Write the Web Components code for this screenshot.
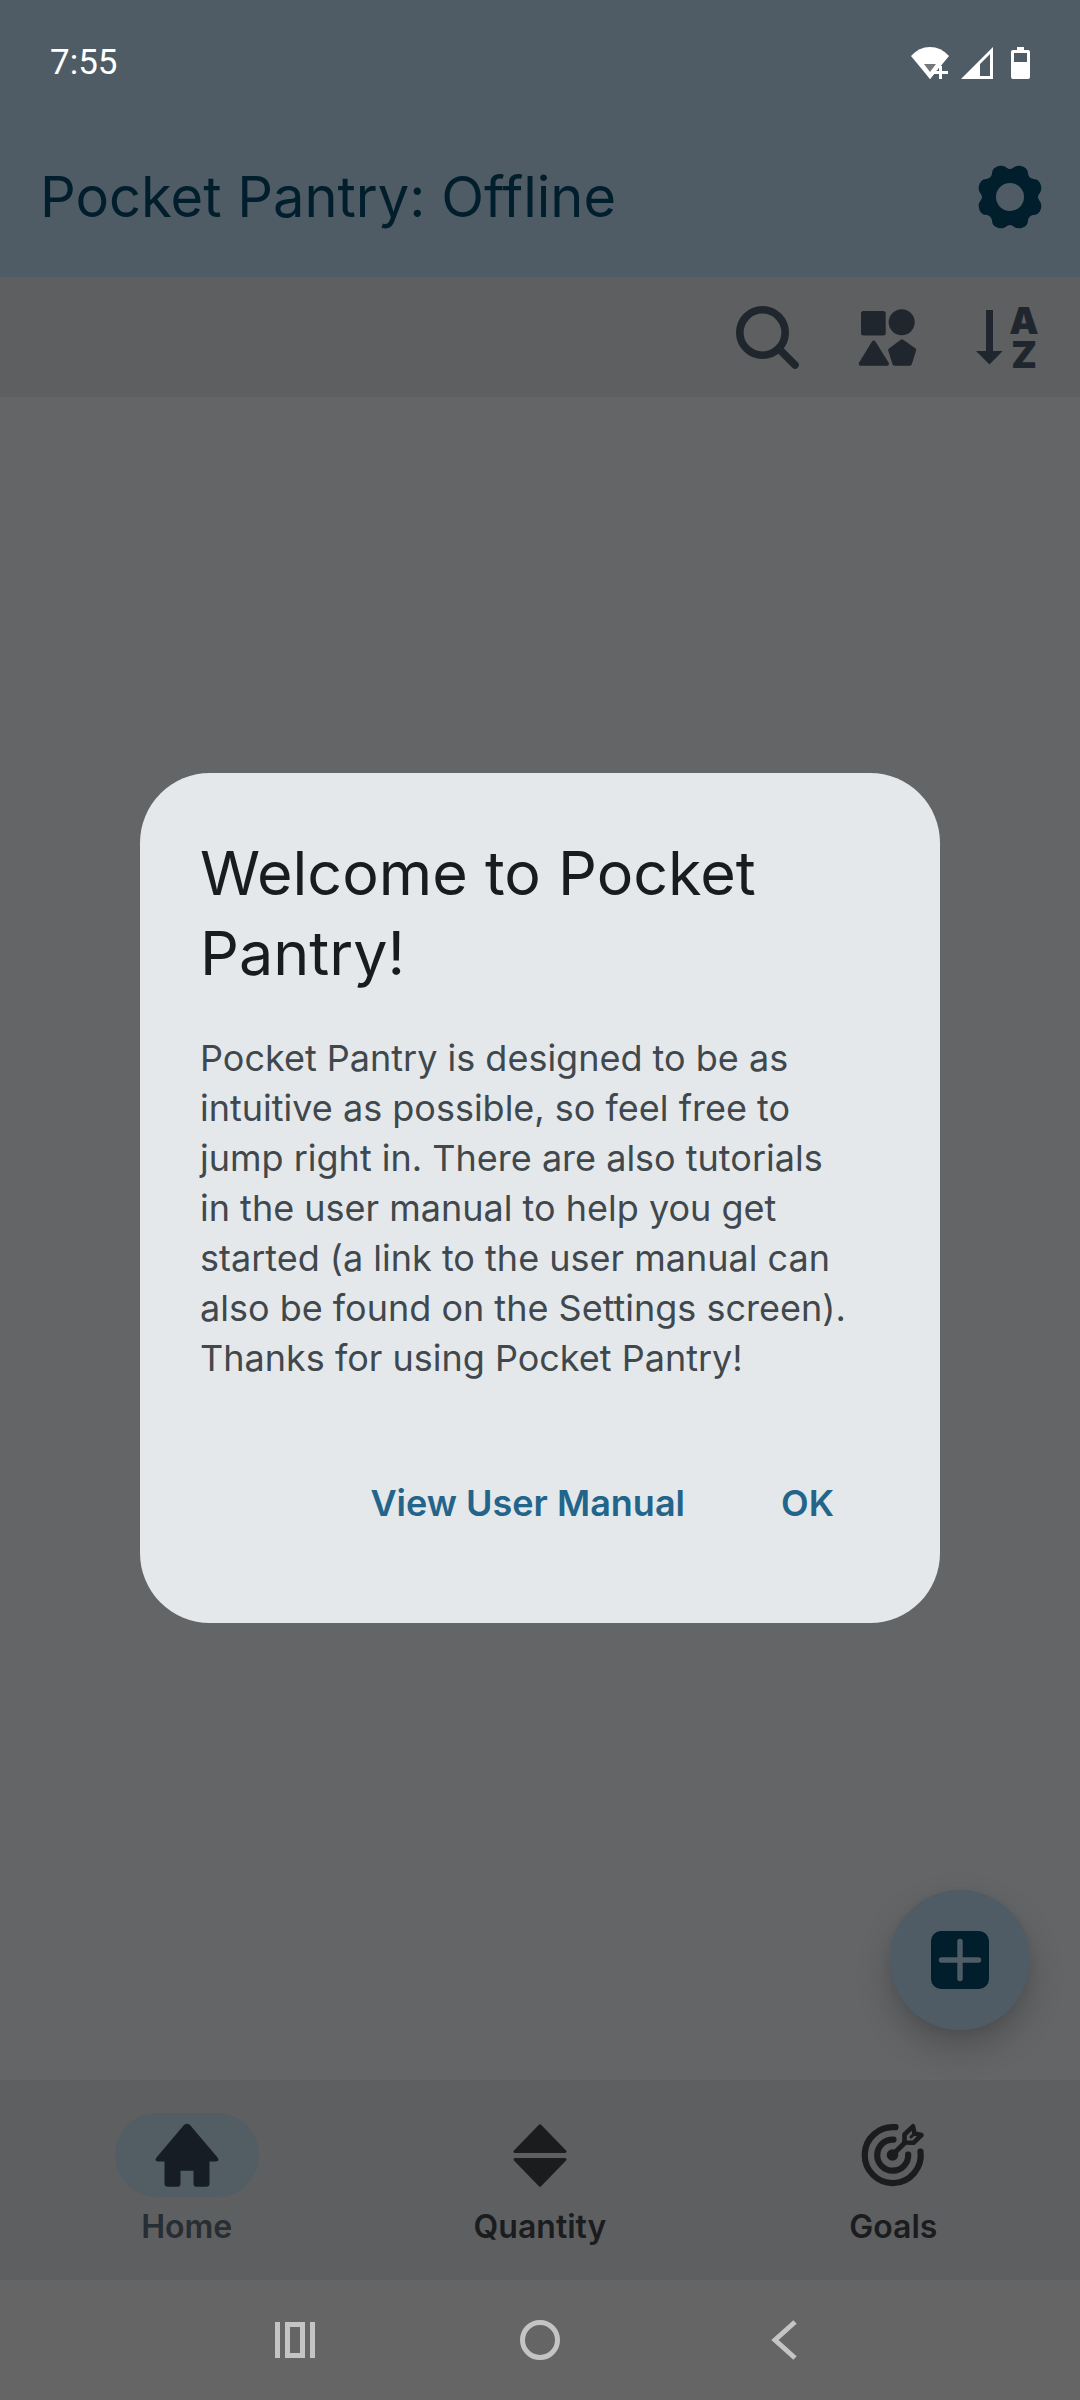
<!DOCTYPE html>
<html lang="en">
<head>
<meta charset="utf-8">
<meta name="viewport" content="width=device-width, initial-scale=1">
<title>Pocket Pantry</title>
<style>
  html, body {
    margin: 0;
    height: 100%;
  }

  body {
    --bar: #505c65;
    --on-bar: #001e2c;
    --surface: #646567;
    --container: #5e5f61;
    font-family: Inter, "Open Sans", sans-serif;
    background: #646567;
  }
</style>
</head>
<body>
<pantry-app></pantry-app>

<script>
/**
 * Attaches an open shadow root and fills it with markup.
 *
 * @param {HTMLElement} host - The element that gets the shadow root.
 * @param {string} html - Styles and markup.
 */
function render (host, html) {
  host.attachShadow({ mode: 'open' })
  host.shadowRoot.innerHTML = html
}

const icons = {
  gear: '<path fill-rule="evenodd" d="M32 4C35 4 36.500 .7 40.500 .7C45 .7 49.300 3 49.800 7C50 11.500 52.500 14 57 14.200C61 14.700 63.300 19 63.300 23.500C63.300 27.500 60 29 60 32C60 35 63.300 36.500 63.300 40.500C63.300 45 61 49.300 57 49.800C52.500 50 50 52.500 49.800 57C49.300 61 45 63.300 40.500 63.300C36.500 63.300 35 60 32 60C29 60 27.500 63.300 23.500 63.300C19 63.300 14.700 61 14.200 57C14 52.500 11.500 50 7 49.800C3 49.300 .7 45 .7 40.500C.7 36.500 4 35 4 32C4 29 .7 27.500 .7 23.500C.7 19 3 14.700 7 14.200C11.500 14 14 11.500 14.200 7C14.700 3 19 .7 23.500 .7C27.500 .7 29 4 32 4ZM32 18A14 14 0 1 0 32 46A14 14 0 1 0 32 18Z"/>',
  search: '<g fill="none" stroke="currentColor" stroke-width="7.600" stroke-linecap="round"><circle cx="26.500" cy="27.500" r="22.700"/><path d="M43 44L59 60"/></g>',
  category: '<rect x="5" y="6" width="24.700" height="24.600" rx="2.500"/><circle cx="45.700" cy="17.300" r="13"/><g stroke="currentColor" stroke-width="4" stroke-linejoin="round"><path d="M17.700 37.500L31 58.700H4.700Z"/><path d="M46 36.300L58.200 45L53.900 58.700H38.400L34.100 45Z"/></g>',
  sort: '<path d="M10 5H17V46H26.700L13.500 59.500L0 46H10Z"/><g font-family="Inter, sans-serif" font-weight="900" font-size="37" text-anchor="middle"><text x="48" y="29">A</text><text x="48" y="63">Z</text></g>',
  home: '<path d="M29 2Q32 -.5 35 2L62.500 34.500Q65 38 61 38.500H54.500V60.500Q54.500 63.800 51 63.800H41Q38.500 63.500 38.500 60.500V47.700H25.500V60.500Q25.500 63.500 23 63.800H13Q9.500 63.800 9.500 60.500V38.500H3Q-1 38 1.500 34.500Z"/>',
  quantity: '<g stroke="currentColor" stroke-width="3" stroke-linejoin="round"><path d="M32 2.800L57 28.500H7Z"/><path d="M32 62.200L57 36.500H7Z"/></g>',
  goals: '<g fill="none" stroke="currentColor" stroke-width="6.200" stroke-linecap="round"><path d="M34.500 4.200A28 28 0 1 0 59.500 28.500"/><path d="M32.500 16.700A15.500 15.500 0 1 0 47.200 31.500"/><path d="M31.500 32L43 20.500" stroke-width="5"/><path d="M43.500 19.500V11.500L52 3.300L53.500 10.500L60.500 12L52.500 19.800Z" stroke-width="4.600" stroke-linejoin="round"/><path d="M50 14L53 11" stroke-width="3"/></g><circle cx="31.500" cy="32" r="5.800"/>',
  add: '<path fill-rule="evenodd" d="M13 3H51A10 10 0 0 1 61 13V51A10 10 0 0 1 51 61H13A10 10 0 0 1 3 51V13A10 10 0 0 1 13 3ZM29.300 13.500V29.300H13.500A2.700 2.700 0 0 0 13.500 34.700H29.300V50.500A2.700 2.700 0 0 0 34.700 50.500V34.700H50.500A2.700 2.700 0 0 0 50.500 29.300H34.700V13.500A2.700 2.700 0 0 0 29.300 13.500Z"/>',
  recents: '<path fill-rule="evenodd" d="M12 14H17V50H12ZM47 14H52V50H47ZM22 14H42V50H22ZM27 19V45H37V19Z"/>',
  circle: '<circle cx="32" cy="32" r="17.500" fill="none" stroke="currentColor" stroke-width="5"/>',
  back: '<path d="M42 14L22 32L42 50" fill="none" stroke="currentColor" stroke-width="5"/>'
}

/**
 * Draws one of the icons on a 64px grid.
 */
class PantryIcon extends HTMLElement {
  connectedCallback () {
    render(this, `
      <style>
        :host { display: block; width: 64px; height: 64px; }
        svg { display: block; overflow: visible; }
      </style>
      <svg viewBox="0 0 64 64" width="64" height="64" fill="currentColor" aria-hidden="true">${icons[this.getAttribute('name')]}</svg>
    `)
  }
}
customElements.define('pantry-icon', PantryIcon)

/**
 * A square button that shows a single icon.
 */
class IconButton extends HTMLElement {
  connectedCallback () {
    render(this, `
      <style>
        :host { display: block; }
        button {
          display: flex;
          justify-content: center;
          align-items: center;
          width: var(--button-width, 120px);
          height: 120px;
          padding: 0;
          border: 0;
          background: none;
          color: inherit;
        }
      </style>
      <button type="button" aria-label="${this.getAttribute('label')}">
        <pantry-icon name="${this.getAttribute('icon')}"></pantry-icon>
      </button>
    `)
  }
}
customElements.define('icon-button', IconButton)

/**
 * Clock, wifi, signal and battery.
 */
class StatusBar extends HTMLElement {
  constructor () {
    super()
    render(this, `
      <style>
        :host {
          display: flex;
          justify-content: space-between;
          align-items: center;
          box-sizing: border-box;
          height: 117px;
          padding: 8px 50px 0;
          background: var(--bar);
          color: #fff;
          font: 35px/40px Roboto, sans-serif;
        }
        .icons { display: flex; gap: 12px; }
        .icons svg { display: block; }
        .icons svg:last-child { margin-left: 6px; }
      </style>
      <time>7:55</time>
      <div class="icons">
        <svg width="38" height="32" viewBox="0 0 38 32" fill="#fff" aria-hidden="true">
          <path d="M0 9Q8 0 19 0Q30 0 38 9L19 32Z"/>
          <path d="M30 19V32M23 25.500H37" stroke="#505c65" stroke-width="6"/>
          <path d="M14 25L19 32L31 17L25 17Z"/>
          <path d="M13 17H25L19 25Z" fill="#777"/>
          <path d="M29.500 19V32M23 25.500H37" stroke="#fff" stroke-width="3"/>
        </svg>
        <svg width="32" height="32" viewBox="0 0 32 32" aria-hidden="true">
          <path fill="#fff" fill-rule="evenodd" d="M32 0V32H0ZM29 7V29H19V17Z"/>
        </svg>
        <svg width="19" height="32" viewBox="0 0 19 32" aria-hidden="true">
          <path fill="#fff" fill-rule="evenodd" d="M6 0H13V3H17Q19 3 19 5V30Q19 32 17 32H2Q0 32 0 30V5Q0 3 2 3H6ZM3 6V15H16V6Z"/>
        </svg>
      </div>
    `)
  }
}
customElements.define('status-bar', StatusBar)

/**
 * Title bar with the slotted action on the right.
 */
class AppBar extends HTMLElement {
  constructor () {
    super()
    render(this, `
      <style>
        :host {
          display: flex;
          justify-content: space-between;
          align-items: center;
          height: 160px;
          padding: 0 10px 0 40px;
          background: var(--bar);
          color: var(--on-bar);
        }
        h1 { margin: 0; font-size: 56px; line-height: 70px; font-weight: 400; }
      </style>
      <h1><slot></slot></h1>
      <slot name="action"></slot>
    `)
  }
}
customElements.define('app-bar', AppBar)

/**
 * Row of list tools, aligned right.
 */
class ToolBar extends HTMLElement {
  constructor () {
    super()
    render(this, `
      <style>
        :host {
          display: flex;
          justify-content: flex-end;
          padding-right: 12px;
          background: var(--container);
          color: #20262d;
        }
      </style>
      <slot></slot>
    `)
  }
}
customElements.define('tool-bar', ToolBar)

/**
 * Floating add button.
 */
class AddButton extends HTMLElement {
  constructor () {
    super()
    render(this, `
      <style>
        :host { display: block; }
        button {
          display: flex;
          justify-content: center;
          align-items: center;
          width: 140px;
          height: 140px;
          padding: 0;
          border: 0;
          border-radius: 50%;
          background: var(--bar);
          color: var(--on-bar);
          box-shadow: 0 16px 34px rgba(0, 0, 0, .22), 0 3px 10px rgba(0, 0, 0, .05);
        }
      </style>
      <button type="button" aria-label="Add item"><pantry-icon name="add"></pantry-icon></button>
    `)
  }
}
customElements.define('add-button', AddButton)

/**
 * A destination in the bottom navigation.
 */
class NavItem extends HTMLElement {
  constructor () {
    super()
    render(this, `
      <style>
        :host { display: block; flex: 1; color: #1a1c1e; }
        a {
          display: flex;
          flex-direction: column;
          align-items: center;
          gap: 10px;
          color: inherit;
          text-decoration: none;
          font-size: 32px;
          line-height: 40px;
          font-weight: 600;
        }
        .pill {
          display: flex;
          justify-content: center;
          align-items: center;
          width: 144px;
          height: 84px;
          border-radius: 42px;
        }
        :host([active]) a { color: #262d33; }
        :host([active]) .pill { background: #525d64; color: #161d25; }
      </style>
      <a href="#"><span class="pill"></span><slot></slot></a>
    `)
  }

  connectedCallback () {
    this.shadowRoot.querySelector('.pill').innerHTML =
      `<pantry-icon name="${this.getAttribute('icon')}"></pantry-icon>`
  }
}
customElements.define('nav-item', NavItem)

/**
 * Bottom navigation of the app.
 */
class BottomNav extends HTMLElement {
  constructor () {
    super()
    render(this, `
      <style>
        :host { display: block; background: var(--container); }
        nav { display: flex; box-sizing: border-box; height: 200px; padding: 33px 10px 0; }
      </style>
      <nav><slot></slot></nav>
    `)
  }
}
customElements.define('bottom-nav', BottomNav)

/**
 * System buttons at the foot of the screen.
 */
class SystemNav extends HTMLElement {
  constructor () {
    super()
    render(this, `
      <style>
        :host {
          --button-width: 245px;
          display: flex;
          justify-content: center;
          background: #656565;
          color: #c4c4c4;
        }
      </style>
      <icon-button icon="recents" label="Recent apps"></icon-button>
      <icon-button icon="circle" label="Home screen"></icon-button>
      <icon-button icon="back" label="Back"></icon-button>
    `)
  }
}
customElements.define('system-nav', SystemNav)

/**
 * Text button used for the dialog actions.
 */
class TextButton extends HTMLElement {
  constructor () {
    super()
    render(this, `
      <style>
        :host { display: block; }
        button {
          min-width: 145px;
          height: 120px;
          padding: 0 30px;
          border: 0;
          background: none;
          color: #23648a;
          font: inherit;
          font-size: 36px;
          line-height: 50px;
          font-weight: 600;
        }
      </style>
      <button type="button"><slot></slot></button>
    `)
  }
}
customElements.define('text-button', TextButton)

/**
 * Dialog centered over the page.
 */
class WelcomeDialog extends HTMLElement {
  constructor () {
    super()
    render(this, `
      <style>
        :host {
          position: absolute;
          inset: 0;
          display: flex;
          justify-content: center;
          align-items: center;
        }
        section {
          box-sizing: border-box;
          width: calc(100% - 280px);
          max-width: 1400px;
          padding: 60px;
          border-radius: 70px;
          background: #e4e8eb;
          color: #41484d;
          font-size: 36px;
          line-height: 50px;
        }
        h2 {
          margin: 0 0 40px;
          color: #181c1f;
          font-size: 61px;
          line-height: 80px;
          font-weight: 400;
        }
        .actions {
          display: flex;
          justify-content: flex-end;
          gap: 20px;
          margin-top: 60px;
        }
      </style>
      <section role="dialog" aria-labelledby="title">
        <h2 id="title"><slot name="title"></slot></h2>
        <slot></slot>
        <div class="actions"><slot name="actions"></slot></div>
      </section>
    `)
  }
}
customElements.define('welcome-dialog', WelcomeDialog)

/**
 * The home screen.
 */
class PantryApp extends HTMLElement {
  constructor () {
    super()
    render(this, `
      <style>
        :host {
          position: relative;
          display: flex;
          flex-direction: column;
          min-height: 100%;
          background: var(--surface);
        }
        main {
          flex: 1;
          display: flex;
          justify-content: flex-end;
          align-items: flex-end;
          padding: 50px;
        }
        welcome-dialog { padding-bottom: 4px; }
      </style>
      <status-bar></status-bar>
      <app-bar>Pocket Pantry: Offline
        <icon-button slot="action" icon="gear" label="Settings"></icon-button>
      </app-bar>
      <tool-bar>
        <icon-button icon="search" label="Search"></icon-button>
        <icon-button icon="category" label="Categories"></icon-button>
        <icon-button icon="sort" label="Sort"></icon-button>
      </tool-bar>
      <main><add-button></add-button></main>
      <bottom-nav>
        <nav-item icon="home" active>Home</nav-item>
        <nav-item icon="quantity">Quantity</nav-item>
        <nav-item icon="goals">Goals</nav-item>
      </bottom-nav>
      <system-nav></system-nav>
      <welcome-dialog>
        <span slot="title">Welcome to Pocket<br>Pantry!</span>
        Pocket Pantry is designed to be as<br>
        intuitive as possible, so feel free to<br>
        jump right in. There are also tutorials<br>
        in the user manual to help you get<br>
        started (a link to the user manual can<br>
        also be found on the Settings screen).<br>
        Thanks for using Pocket Pantry!
        <text-button slot="actions">View User Manual</text-button>
        <text-button slot="actions">OK</text-button>
      </welcome-dialog>
    `)
  }
}
customElements.define('pantry-app', PantryApp)
</script>
</body>
</html>
